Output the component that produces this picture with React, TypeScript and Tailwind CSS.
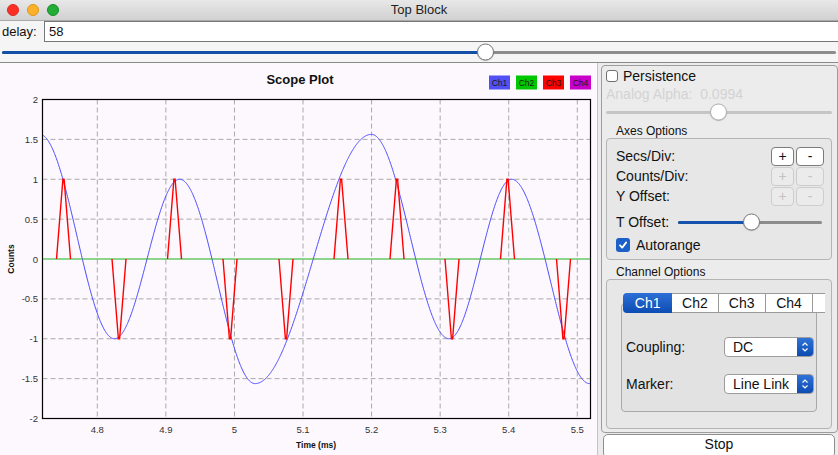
import React from "react";

const X = (t: number) => 97.3 + (t - 4.8) * 685.7;
const Y = (v: number) => 259 - v * 79.75;
const xToT = (x: number) => 4.8 + (x - 97.3) / 685.7;

const EXT: [number, number][] = [
  [4.546, -1.5625],
  [4.716, 1.5625],
  [4.825, -1],
  [4.92, 1],
  [5.03, -1.5625],
  [5.1998, 1.5625],
  [5.313, -1],
  [5.404, 1],
  [5.518, -1.5625],
  [5.69, 1.5625],
];

function blueVal(t: number) {
  for (let i = 0; i < EXT.length - 1; i++) {
    const [t0, v0] = EXT[i];
    const [t1, v1] = EXT[i + 1];
    if (t >= t0 && t <= t1) {
      const s = (t - t0) / (t1 - t0);
      return v0 + ((v1 - v0) * (1 - Math.cos(Math.PI * s))) / 2;
    }
  }
  return 0;
}

const L = 42.5,
  R = 590.5,
  T = 99.5,
  B = 418.5;

function bluePath() {
  let d = "";
  for (let x = L; x <= R + 0.01; x += 0.5) {
    const y = Y(blueVal(xToT(x)));
    d += (d ? " L" : "M") + x.toFixed(2) + " " + y.toFixed(2);
  }
  return d;
}

function pulsePath(c: number, sgn: number) {
  const hw = 7;
  return `M${c - hw} ${Y(0)} L${c - 0.6} ${Y(sgn)} L${c + 0.6} ${Y(sgn)} L${c + hw} ${Y(0)}`;
}

const PULSES: [number, number][] = [
  [63.5, 1],
  [119, -1],
  [174.5, 1],
  [230, -1],
  [286, -1],
  [341, 1],
  [397, 1],
  [452, -1],
  [507.5, 1],
  [563.5, -1],
];

const XT = [4.8, 4.9, 5, 5.1, 5.2, 5.3, 5.4, 5.5];
const YT = [2, 1.5, 1, 0.5, 0, -0.5, -1, -1.5, -2];

function ScopePlot() {
  const font = "Liberation Sans, Arial, sans-serif";
  const legend: [string, string, number][] = [
    ["Ch1", "#5050f6", 489],
    ["Ch2", "#00c800", 516],
    ["Ch3", "#ff0000", 543],
    ["Ch4", "#c800c8", 570],
  ];
  return (
    <svg width="597" height="392" viewBox="0 63 597 392" className="block">
      <rect x="0" y="63" width="597" height="392" fill="#fdf8fd" />
      <text x="300" y="83.5" textAnchor="middle" fontFamily={font} fontSize="13" fontWeight="bold" fill="#111">
        Scope Plot
      </text>
      {legend.map(([n, c, x]) => (
        <g key={n}>
          <rect x={x} y="75.5" width="21" height="14" fill={c} />
          <text x={x + 10.5} y="85.5" textAnchor="middle" fontFamily={font} fontSize="8.5" fill="#1a1a1a">
            {n}
          </text>
        </g>
      ))}
      {XT.map((t) => (
        <line key={"vx" + t} x1={X(t)} x2={X(t)} y1={T} y2={B} stroke="#a9a9a9" strokeDasharray="5 3" strokeWidth="1" />
      ))}
      {YT.filter((v) => v !== 0 && Math.abs(v) < 2).map((v) => (
        <line key={"hy" + v} x1={L} x2={R} y1={Y(v)} y2={Y(v)} stroke="#a9a9a9" strokeDasharray="5 3" strokeWidth="1" />
      ))}
      <path d={bluePath()} fill="none" stroke="#4b4bff" strokeWidth="1" />
      <line x1={L} x2={R} y1={Y(0)} y2={Y(0)} stroke="#1fb21f" strokeWidth="1.2" />
      {PULSES.map(([c, s]) => (
        <path key={c} d={pulsePath(c, s)} fill="none" stroke="#ff0000" strokeWidth="1.4" strokeLinejoin="miter" />
      ))}
      <rect x={L} y={T} width={R - L} height={B - T} fill="none" stroke="#000" strokeWidth="1.2" />
      {YT.map((v) => (
        <text key={"yl" + v} x="38" y={Y(v) + 3.5} textAnchor="end" fontFamily={font} fontSize="9.5" fill="#333">
          {v}
        </text>
      ))}
      {XT.map((t) => (
        <text key={"xl" + t} x={X(t)} y="432.5" textAnchor="middle" fontFamily={font} fontSize="9.5" fill="#333">
          {t}
        </text>
      ))}
      <text x="316" y="448" textAnchor="middle" fontFamily={font} fontSize="8.5" fontWeight="bold" fill="#111">
        Time (ms)
      </text>
      <text
        x="0"
        y="0"
        transform="translate(14 259) rotate(-90)"
        textAnchor="middle"
        fontFamily={font}
        fontSize="8.5"
        fontWeight="bold"
        fill="#111"
      >
        Counts
      </text>
    </svg>
  );
}

function Knob({ className }: { className: string }) {
  return (
    <div
      className={
        "absolute top-1/2 -translate-y-1/2 w-[17px] h-[17px] rounded-full bg-white shadow-[0_0.5px_1px_rgba(0,0,0,0.25)] " +
        className
      }
    />
  );
}

function PlusMinus({ enabled }: { enabled: boolean }) {
  const cls = enabled
    ? "bg-white border-[#7b7b7b] text-[#111]"
    : "bg-[#ebebeb] border-[#cdcdcd] text-[#c2c2c2]";
  return (
    <div className="flex gap-[2px]">
      <div className={"w-[23px] h-[19px] border rounded-[4px] flex items-center justify-center text-[14px] leading-none " + cls}>
        +
      </div>
      <div className={"w-[28px] h-[19px] border rounded-[4px] flex items-center justify-center text-[14px] leading-none " + cls}>
        -
      </div>
    </div>
  );
}

function Select({ value }: { value: string }) {
  return (
    <div className="w-[90px] h-[20px] flex border border-[#9c9c9c] rounded-[4px] bg-white overflow-hidden">
      <div className="flex-1 flex items-center pl-[8px] text-[14px] text-[#111]">{value}</div>
      <div className="w-[16px] h-full bg-gradient-to-b from-[#2f72d8] to-[#0b4cb2] flex items-center justify-center">
        <svg width="8" height="12" viewBox="0 0 8 12">
          <path d="M1.5 4.5 L4 2 L6.5 4.5 M1.5 7.5 L4 10 L6.5 7.5" fill="none" stroke="#fff" strokeWidth="1.2" />
        </svg>
      </div>
    </div>
  );
}

function RightPanel() {
  return (
    <div className="flex flex-col pl-[3px] pt-[2px] w-[240px]">
      <div className="shrink-0 w-[237px] h-[368px] border border-[#9d9d9d] rounded-[4px] flex flex-col">
        <div className="shrink-0 mt-[3px] h-[14px] flex items-center pl-[4px] gap-[5px]">
          <div className="w-[12px] h-[12px] border border-[#6f6f6f] rounded-[3px] bg-white" />
          <span className="text-[14px] text-[#111]">Persistence</span>
        </div>
        <div className="shrink-0 mt-[3px] h-[16px] flex items-center pl-[4px] text-[14px] text-[#d3d3d3] whitespace-pre">
          Analog Alpha:  0.0994
        </div>
        <div className="shrink-0 mt-[2px] h-[16px] flex items-center pl-[4px]">
          <div className="relative w-[226px] h-[3px] rounded-full bg-[#c5c5c5]">
            <Knob className="left-[104px] border border-[#b3b3b3]" />
          </div>
        </div>
        <div className="shrink-0 mt-[4px] h-[14px] flex items-center pl-[14px] text-[12px] text-[#111]">Axes Options</div>
        <div className="shrink-0 ml-[4px] w-[226px] h-[122px] border border-[#b4b4b4] rounded-[4px] bg-[#e7e7e7] flex flex-col pt-[7px] pl-[9px] pr-[7px]">
          {[
            ["Secs/Div:", true],
            ["Counts/Div:", false],
            ["Y Offset:", false],
          ].map(([l, e]) => (
            <div key={l as string} className="shrink-0 h-[20px] flex items-center justify-between">
              <span className="text-[14px] text-[#111]">{l as string}</span>
              <PlusMinus enabled={e as boolean} />
            </div>
          ))}
          <div className="shrink-0 mt-[6px] h-[20px] flex items-center">
            <span className="w-[62px] text-[14px] text-[#111]">T Offset:</span>
            <div className="relative w-[144px] h-[3px] rounded-full bg-[#8c8c8c]">
              <div className="w-[74px] h-full rounded-l-full bg-[#1452ab]" />
              <Knob className="left-[65px] border border-[#7d7d7d]" />
            </div>
          </div>
          <div className="shrink-0 mt-[5px] h-[16px] flex items-center gap-[6px]">
            <div className="w-[14px] h-[14px] rounded-[3px] bg-[#1b5fc9] flex items-center justify-center">
              <svg width="10" height="10" viewBox="0 0 10 10">
                <path d="M2 5.3 L4.2 7.6 L8.2 2.4" fill="none" stroke="#fff" strokeWidth="1.8" strokeLinecap="round" strokeLinejoin="round" />
              </svg>
            </div>
            <span className="text-[14px] text-[#111]">Autorange</span>
          </div>
        </div>
        <div className="shrink-0 mt-[5px] h-[14px] flex items-center pl-[14px] text-[12px] text-[#111]">Channel Options</div>
        <div className="shrink-0 ml-[4px] w-[226px] h-[150px] border border-[#b4b4b4] rounded-[4px] bg-[#e7e7e7] flex flex-col pt-[13px]">
          <div className="shrink-0 relative z-10 ml-[16px] w-[202px] h-[20px] overflow-hidden flex">
            <div className="w-[50px] h-full rounded-l-[4px] bg-gradient-to-b from-[#2c6fd6] to-[#0c4db3] text-white text-[14px] flex items-center justify-center">
              Ch1
            </div>
            {["Ch2", "Ch3", "Ch4"].map((c, i) => (
              <div
                key={c}
                className={
                  "h-full bg-white border-y border-r border-[#9a9a9a] text-[14px] text-[#111] flex items-center justify-center " +
                  (i === 0 ? "w-[47px]" : "w-[48px]")
                }
              >
                {c}
              </div>
            ))}
            <div className="w-[12px] h-full bg-white border-y border-[#9a9a9a]" />
          </div>
          <div className="shrink-0 -mt-[10px] ml-[14px] w-[196px] h-[109px] border border-[#a9a9a9] rounded-[4px] bg-[#e2e2e2] flex flex-col pt-[33px] pl-[4px] gap-[17px]">
            <div className="h-[20px] flex items-center">
              <span className="w-[98px] text-[14px] text-[#111]">Coupling:</span>
              <Select value="DC" />
            </div>
            <div className="h-[20px] flex items-center">
              <span className="w-[98px] text-[14px] text-[#111]">Marker:</span>
              <Select value="Line Link" />
            </div>
          </div>
        </div>
      </div>
      <div className="shrink-0 mt-[1px] ml-[2px] w-[232px] h-[24px] border border-[#8f8f8f] rounded-[5px] bg-white flex justify-center pt-[1px] text-[14px] leading-[17px] text-[#111]">
        Stop
      </div>
    </div>
  );
}

export default function App() {
  return (
    <div className="w-[838px] h-[455px] overflow-hidden bg-[#ececec] flex flex-col font-['Liberation_Sans',Arial,sans-serif]">
      <div className="shrink-0 h-[21px] grid grid-cols-[1fr_auto_1fr] items-center bg-gradient-to-b from-[#e8e8e8] to-[#d1d1d1] border-b border-[#a9a9a9]">
        <div className="flex items-center gap-[8px] pl-[7px]">
          <div className="w-[12px] h-[12px] rounded-full bg-[#fc2f25] border border-[#dd2a20]" />
          <div className="w-[12px] h-[12px] rounded-full bg-[#fdb02a] border border-[#de9618]" />
          <div className="w-[12px] h-[12px] rounded-full bg-[#21ad36] border border-[#178c28]" />
        </div>
        <div className="text-[13px] text-[#222]">Top Block</div>
        <div />
      </div>
      <div className="shrink-0 h-[21px] flex items-center bg-[#f5f5f5]">
        <span className="w-[44px] pl-[2px] text-[13px] text-[#111]">delay:</span>
        <div className="flex-1 -mr-[2px] h-[21px] border border-[#777] bg-white flex items-center pl-[4px] text-[13px] text-[#111]">
          58
        </div>
      </div>
      <div className="shrink-0 h-[21px] flex items-center px-[2px] bg-[#f5f5f5] border-b border-[#8a8a8a]">
        <div className="relative flex-1 h-[3px] rounded-full bg-[#8c8c8c]">
          <div className="w-[484px] h-full rounded-l-full bg-[#1250a8]" />
          <Knob className="left-[475px] border border-[#7a7a7a]" />
        </div>
      </div>
      <div className="flex flex-1 min-h-0">
        <div className="w-[598px] border-r border-[#c4c4c4]">
          <ScopePlot />
        </div>
        <RightPanel />
      </div>
    </div>
  );
}
